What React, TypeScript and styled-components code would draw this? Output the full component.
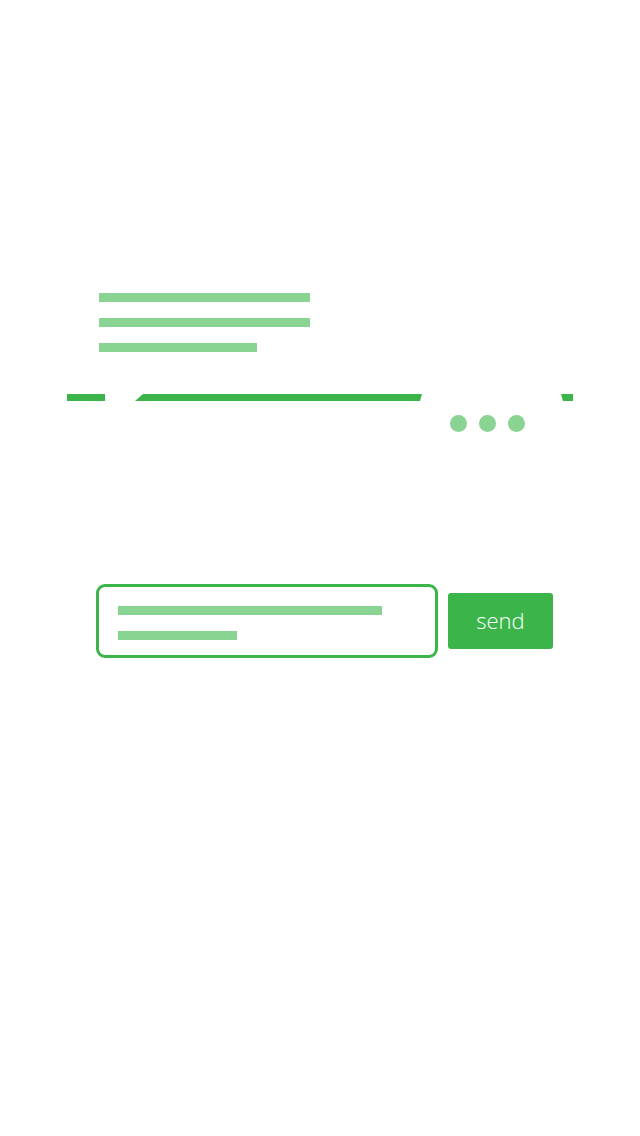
import React from "react";
import styled, { createGlobalStyle } from "styled-components";

const GREEN = "#3bb54a";
const LIGHT = "#89d393";

const Global = createGlobalStyle`
  html, body { margin: 0; padding: 0; background: #ffffff; }
  body { font-family: "Open Sans", "Liberation Sans", sans-serif; }
`;

const Page = styled.div`
  width: 640px;
  height: 1136px;
  box-sizing: border-box;
  padding-top: 293px;
  display: flex;
  flex-direction: column;
  background: #ffffff;
`;

const LineStack = styled.div<{ $left: number }>`
  display: flex;
  flex-direction: column;
  gap: 16px;
  padding-left: ${(p) => p.$left}px;
`;

const TextLine = styled.div<{ $w: number }>`
  width: ${(p) => p.$w}px;
  height: 9px;
  background: ${LIGHT};
`;

const BarArt = styled.svg`
  display: block;
  margin-top: 42px;
  width: 640px;
  height: 7px;
`;

const Dots = styled.div`
  display: flex;
  justify-content: flex-end;
  gap: 12px;
  padding-right: 115px;
  margin-top: 14px;
`;

const Dot = styled.span`
  width: 17px;
  height: 17px;
  border-radius: 50%;
  background: ${LIGHT};
`;

const InputRow = styled.div`
  display: flex;
  align-items: center;
  gap: 10px;
  padding-left: 96px;
  margin-top: 152px;
`;

const InputBox = styled.div`
  width: 342px;
  height: 74px;
  box-sizing: border-box;
  border: 3px solid ${GREEN};
  border-radius: 9px;
  padding: 19px 0 0 19px;
`;

const SendButton = styled.button`
  width: 105px;
  height: 56px;
  border: none;
  border-radius: 3px;
  background: ${GREEN};
  color: #ffffff;
  font-family: "Open Sans", "Liberation Sans", sans-serif;
  font-weight: 300;
  font-size: 22px;
  padding: 0 0 2px 0;
  cursor: pointer;
`;

export default function App() {
  return (
    <>
      <Global />
      <Page>
        <LineStack $left={99}>
          <TextLine $w={211} />
          <TextLine $w={211} />
          <TextLine $w={158} />
        </LineStack>
        <BarArt viewBox="0 0 640 7">
          <rect x="67" y="0" width="38" height="7" fill={GREEN} />
          <polygon points="143,0 422,0 420,7 135,7" fill={GREEN} />
          <polygon points="561,0 573,0 573,7 563,7" fill={GREEN} />
        </BarArt>
        <Dots>
          <Dot />
          <Dot />
          <Dot />
        </Dots>
        <InputRow>
          <InputBox>
            <LineStack $left={0}>
              <TextLine $w={264} />
              <TextLine $w={119} />
            </LineStack>
          </InputBox>
          <SendButton>send</SendButton>
        </InputRow>
      </Page>
    </>
  );
}
